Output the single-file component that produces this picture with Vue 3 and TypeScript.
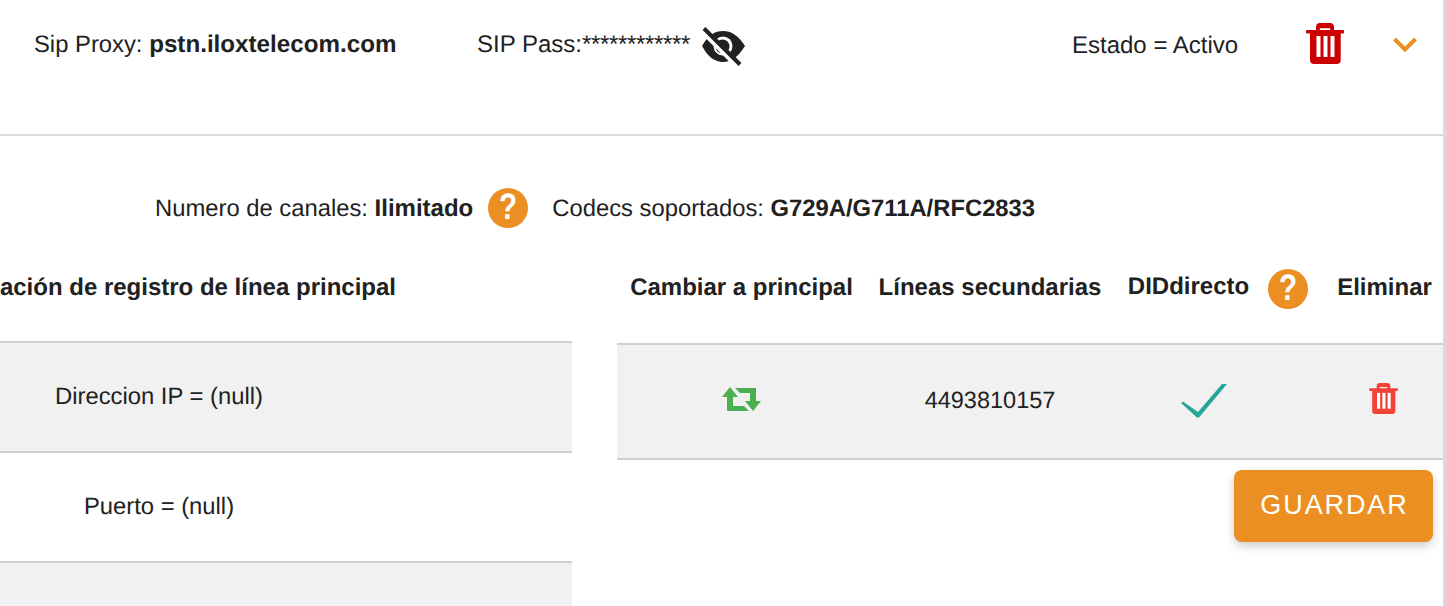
<script setup lang="ts">
const slits = [10.5, 17.5, 24.5]
</script>

<template>
  <div class="page">
    <header class="top">
      <span class="proxy"><span class="thin">Sip Proxy:</span> <b class="host">pstn.iloxtelecom.com</b></span>
      <span class="pass">SIP Pass:<span class="stars">************</span></span>
      <svg class="eye" viewBox="0 0 46 40" aria-label="ocultar">
        <path d="M2 19C8 8 15 4 23 4c8 0 15 4 22 15-7 11-14 16-22 16-8 0-15-5-21-16z" fill="#212121" />
        <circle cx="23" cy="19" r="9.500" fill="#fff" />
        <circle cx="22.500" cy="19.500" r="7" fill="#212121" />
        <path d="M2 2.500l36 36" stroke="#fff" stroke-width="7" />
        <path d="M4 1.500l36 36" stroke="#212121" stroke-width="4" />
      </svg>
      <span class="estado">Estado = Activo</span>
      <svg class="trash big" viewBox="0 0 38 41" aria-label="eliminar">
        <path d="M10 8V4a4 4 0 0 1 4-4h10a4 4 0 0 1 4 4v4h-3.500L24 5.300H14L13.500 8z" fill="currentColor" />
        <rect y="7" width="38" height="3.500" rx="1" fill="currentColor" />
        <path d="M4 10h30.700v27a4 4 0 0 1-4 4H8a4 4 0 0 1-4-4z" fill="currentColor" />
        <rect v-for="x in slits" :key="x" :x="x" y="13" width="4" height="21" fill="#fff" />
      </svg>
      <svg class="chevron" viewBox="0 0 26 18" aria-label="expandir">
        <path d="M2.500 3l10.500 10.500L23.500 3" fill="none" stroke="#eb8f23" stroke-width="4" />
      </svg>
    </header>

    <section class="info">
      <span class="txt">Numero de canales: <b class="ilim">Ilimitado</b></span>
      <span class="help first"><i>?</i></span>
      <span class="txt">Codecs soportados: <b>G729A/G711A/RFC2833</b></span>
    </section>

    <main class="tables">
      <section class="left">
        <div class="left-head"><b>Información de registro de línea principal</b></div>
        <div class="left-row grey">Direccion IP = (null)</div>
        <div class="left-row">Puerto = (null)</div>
        <div class="left-row grey last"></div>
      </section>

      <section class="right">
        <div class="grid head">
          <b>Cambiar a principal</b>
          <b>Líneas secundarias</b>
          <span class="did"><b>DIDdirecto</b><span class="help"><i>?</i></span></span>
          <b class="del">Eliminar</b>
        </div>
        <div class="grid row">
          <svg class="swap" viewBox="0 0 40 26" aria-label="cambiar">
            <path d="M8 0l8 10h-5v9h11l5 5H5V10H0z" fill="#4caf50" />
            <path d="M13 1h21v13h5l-8 10-8-10h5V6H18z" fill="#4caf50" />
          </svg>
          <span class="num">4493810157</span>
          <svg class="check" viewBox="0 0 46 34" aria-label="sí">
            <path d="M0 19l2-1.500L17 28 41 0h5L18 33.500h-2z" fill="#26a69a" />
          </svg>
          <svg class="trash small" viewBox="0 0 38 41" aria-label="eliminar">
            <path d="M10 8V4a4 4 0 0 1 4-4h10a4 4 0 0 1 4 4v4h-3.500L24 5.300H14L13.500 8z" fill="currentColor" />
            <rect y="7" width="38" height="3.500" rx="1" fill="currentColor" />
            <path d="M4 10h30.700v27a4 4 0 0 1-4 4H8a4 4 0 0 1-4-4z" fill="currentColor" />
            <rect v-for="x in slits" :key="x" :x="x" y="13" width="4" height="21" fill="#fff" />
          </svg>
        </div>
        <div class="actions">
          <button class="save" type="button">GUARDAR</button>
        </div>
      </section>
    </main>
  </div>
</template>

<style scoped>
.page {
  width: 1443px;
  height: 606px;
  overflow: hidden;
  border-right: 3px solid #d9d9d9;
  font-family: "Liberation Sans", Arial, sans-serif;
  font-size: 24px;
  text-rendering: geometricPrecision;
  color: #212121;
  background: #fff;
}
.top {
  border-bottom: 2px solid #d9d9d9;
  display: flex;
  align-items: flex-start;
  padding-left: 34px;
  padding-top: 16px;
  height: 118px;
  line-height: 58px;
}
.proxy { width: 443px; flex: none; white-space: nowrap; }
.thin { font-size: 23.8px; }
.host { font-size: 24.2px; }
.pass { flex: none; width: 224px; white-space: nowrap; }
.stars { letter-spacing: -0.33px; }
.eye { flex: none; width: 46px; height: 40px; margin-top: 11px; margin-left: -1px; }
.estado { flex: none; margin-left: 326px; width: 234px; line-height: 60px; }
.trash.big { flex: none; width: 38px; height: 41px; color: #cc0000; margin-top: 7px; }
.chevron { flex: none; width: 26px; height: 18px; margin-left: 48px; margin-top: 20px; }
.info {
  display: flex;
  align-items: center;
  padding: 52px 0 0 155px;
  height: 40px;
  font-size: 23.8px;
}
.txt { padding-top: 2px; }
.ilim { font-size: 24px; }
.help {
  flex: none;
  width: 40px;
  height: 40px;
  border-radius: 50%;
  background: #eb8f23;
  color: #fff;
  font-weight: 700;
  font-size: 37px;
  line-height: 38px;
  text-align: center;
}
.help i {
  display: block;
  font-style: normal;
  transform: scaleX(0.8);
}
.help.first { margin: 0 24px 0 15px; }
.tables {
  display: flex;
  align-items: flex-start;
}
.left { width: 572px; flex: none; overflow: hidden; }
.left-head {
  height: 115px;
  box-sizing: border-box;
  padding: 43px 176px 0 0;
  line-height: 34px;
  border-bottom: 2px solid #d0d0d0;
  display: flex;
  justify-content: flex-end;
  white-space: nowrap;
}
.left-row {
  height: 108px;
  border-bottom: 2px solid #d0d0d0;
  padding-right: 254px;
  text-align: center;
  line-height: 108px;
  font-size: 23.8px;
}
.left-row.grey { background: #f1f1f1; }
.left-row.last { border-bottom: 0; }
.right { width: 826px; margin-left: 45px; flex: none; }
.grid {
  display: grid;
  grid-template-columns: 249px 248px 210px 119px;
  justify-items: center;
  align-items: center;
}
.head {
  height: 117px;
  box-sizing: border-box;
  align-items: start;
  padding-top: 43px;
  line-height: 34px;
  border-bottom: 2px solid #d0d0d0;
  white-space: nowrap;
}
.did { display: flex; align-items: flex-start; gap: 19px; margin-top: -2px; margin-right: 2px; line-height: 36px; }
.del { margin-left: 2px; }
.row {
  height: 113px;
  background: #f1f1f1;
  border-bottom: 2px solid #d0d0d0;
}
.num { font-size: 23.5px; margin-top: -2px; }
.swap { width: 40px; height: 26px; margin-top: -3px; }
.check { width: 46px; height: 34px; margin-right: 30px; margin-top: -1px; }
.trash.small { width: 29px; height: 31px; color: #f44336; margin-bottom: 6px; }
.actions { display: flex; justify-content: flex-end; padding: 10px 10px 0 0; }
.save {
  width: 199px;
  height: 72px;
  border: 0;
  padding: 0 0 2px 2px;
  border-radius: 8px;
  background: #eb8f23;
  color: #fff;
  font: 400 27px "Liberation Sans", Arial, sans-serif;
  letter-spacing: 1.9px;
  box-shadow: 0 4px 10px rgba(0, 0, 0, 0.2);
}
</style>
